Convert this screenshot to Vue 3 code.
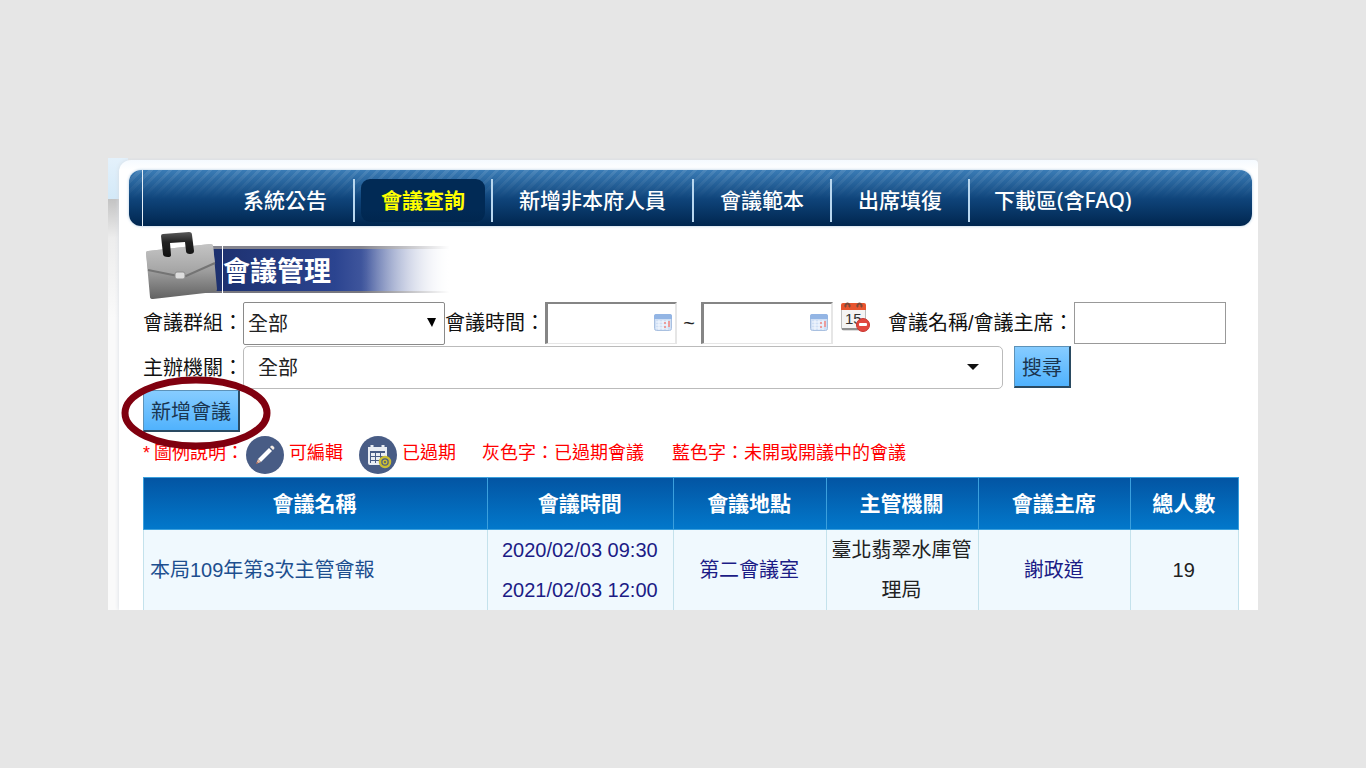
<script setup>
import { ref } from 'vue'

const navItems = [
  { text: '系統公告' },
  { text: '會議查詢', active: true },
  { text: '新增非本府人員' },
  { text: '會議範本' },
  { text: '出席填復' },
  { text: '下載區(含FAQ)' },
]

const group = ref('全部')
const agency = ref('全部')
const dateFrom = ref('')
const dateTo = ref('')
const keyword = ref('')

const meetings = [
  {
    name: '本局109年第3次主管會報',
    start: '2020/02/03 09:30',
    end: '2021/02/03 12:00',
    place: '第二會議室',
    agency: '臺北翡翠水庫管理局',
    chair: '謝政道',
    people: 19,
  },
]
</script>

<template>
  <div class="frame">
    <div class="panel">
      <nav class="nav">
        <ul>
          <li v-for="item in navItems" :key="item.text">
            <a href="#" :class="{ active: item.active }">{{ item.text }}</a>
          </li>
        </ul>
      </nav>

      <main class="content">
        <header class="title">
          <svg class="briefcase" viewBox="0 0 74 68" width="74" height="68" aria-hidden="true">
            <defs>
              <linearGradient id="bag" x1="0" y1="0" x2="0" y2="1">
                <stop offset="0" stop-color="#c2c2c2" />
                <stop offset="0.5" stop-color="#9c9c9c" />
                <stop offset="1" stop-color="#626262" />
              </linearGradient>
              <linearGradient id="flap" x1="0" y1="0" x2="0" y2="1">
                <stop offset="0" stop-color="#c4c4c4" />
                <stop offset="1" stop-color="#a0a0a0" />
              </linearGradient>
              <linearGradient id="handle" x1="0" y1="0" x2="0" y2="1">
                <stop offset="0" stop-color="#5a5a5a" />
                <stop offset="0.4" stop-color="#222" />
                <stop offset="1" stop-color="#111" />
              </linearGradient>
            </defs>
            <path d="M2 21 Q2 19 4 19 L66 12 Q69 12 69 14 L73 57 Q73 60 70 60 L9 67 Q6 67 6 65 Z" fill="url(#bag)" />
            <path d="M2 21 Q2 19 4 19 L66 12 Q69 12 69 14 L71 31 L42 44 L34 44 L4 38 Z" fill="url(#flap)" />
            <path d="M4 38 L34 44 L42 44 L71 31" fill="none" stroke="#747474" stroke-width="2" />
            <path d="M17 4 Q17 2 19 2 L45 0 Q48 0 48 3 L50 19 Q50 22 46 22 Q42 22 42 19 L41 10 L26 11 L27 23 Q27 25 24 25 Q19 25 19 22 Z" fill="url(#handle)" />
            <rect x="31" y="40" width="10" height="7" rx="2" fill="#ddd" stroke="#8b8b8b" />
          </svg>
          <h1>會議管理</h1>
        </header>

        <form @submit.prevent>
          <div class="row">
            <label for="group">會議群組：</label>
            <span class="select group">
              <select id="group" v-model="group">
                <option>全部</option>
              </select>
              <svg viewBox="0 0 10 10" width="10" height="10" aria-hidden="true"><path d="M0 0 H9 L5 9 Z" fill="#000" /></svg>
            </span>
            <label for="from">會議時間：</label>
            <span class="date">
              <input id="from" v-model="dateFrom" type="text" />
              <svg viewBox="0 0 18 17" width="18" height="17" aria-hidden="true">
                <rect x="0.5" y="0.5" width="17" height="16" rx="2" fill="#cfdff5" stroke="#a9c0e0" />
                <path d="M0 2 Q0 0 2 0 H16 Q18 0 18 2 V5 H0 Z" fill="#93b5e4" />
                <path d="M2 8 H16 M2 11 H16 M2 14 H12 M5 6 V16 M9 6 V16 M13 6 V16" stroke="#f4f8fe" />
                <path d="M10 8 h2 v2 h-2 Z M14 7 h2 v6 h-2 Z M10 12 h2 v2 h-2 Z" fill="#eb9c9c" />
              </svg>
            </span>
            <span class="tilde">~</span>
            <span class="date">
              <input id="to" v-model="dateTo" type="text" aria-label="會議時間" />
              <svg viewBox="0 0 18 17" width="18" height="17" aria-hidden="true">
                <rect x="0.5" y="0.5" width="17" height="16" rx="2" fill="#cfdff5" stroke="#a9c0e0" />
                <path d="M0 2 Q0 0 2 0 H16 Q18 0 18 2 V5 H0 Z" fill="#93b5e4" />
                <path d="M2 8 H16 M2 11 H16 M2 14 H12 M5 6 V16 M9 6 V16 M13 6 V16" stroke="#f4f8fe" />
                <path d="M10 8 h2 v2 h-2 Z M14 7 h2 v6 h-2 Z M10 12 h2 v2 h-2 Z" fill="#eb9c9c" />
              </svg>
            </span>
            <button class="clear" type="button" aria-label="清除">
              <svg viewBox="0 0 29 31" width="29" height="31" aria-hidden="true">
                <rect x="0.5" y="3" width="24" height="25" rx="2" fill="#f4f4f4" stroke="#bcbcbc" />
                <path d="M1 27 H24" stroke="#8f8f8f" stroke-width="2" />
                <path d="M0 3 Q0 1 2 1 H23 Q25 1 25 3 V8 H0 Z" fill="#e8552f" />
                <path d="M5 5 a2 2 0 1 1 3 0 M17 5 a2 2 0 1 1 3 0" fill="none" stroke="#7b4a3a" stroke-width="2" />
                <text x="4" y="22" font-size="15" fill="#333">15</text>
                <circle cx="22" cy="23" r="6.5" fill="#e2473f" stroke="#c9352e" />
                <rect x="18" y="21" width="8" height="3" rx="1" fill="#fff" />
              </svg>
            </button>
            <label for="keyword">會議名稱/會議主席：</label>
            <input id="keyword" v-model="keyword" class="keyword" type="text" />
          </div>

          <div class="row second">
            <label for="agency">主辦機關：</label>
            <span class="select agency">
              <select id="agency" v-model="agency">
                <option>全部</option>
              </select>
              <svg viewBox="0 0 12 6" width="12" height="6" aria-hidden="true"><path d="M0 0 H12 L6 6 Z" fill="#111" /></svg>
            </span>
            <button class="blue" type="submit">搜尋</button>
          </div>

          <div class="add">
            <button class="blue" type="button">新增會議</button>
            <svg class="ring" viewBox="0 0 150 74" width="150" height="74" aria-hidden="true">
              <ellipse cx="75" cy="37" rx="71" ry="33" fill="none" stroke="#80000f" stroke-width="7" />
            </svg>
          </div>
        </form>

        <div class="legend">
          <span class="star">*</span>
          <span class="head">圖例說明：</span>
          <svg viewBox="0 0 38 38" width="38" height="38" aria-hidden="true">
            <circle cx="19" cy="19" r="19" fill="#485c85" />
            <path d="M12 23 L23 12 L26 15 L15 26 Z" fill="#fff" />
            <path d="M24 11 L25 10 Q26 9 27 10 L28 11 Q29 12 28 13 L27 14 Z" fill="#f3ece4" />
            <path d="M12 23 L15 26 L10 28 Z" fill="#e4b9a2" />
            <path d="M11 26 L12 27 L10 28 Z" fill="#8b3a2c" />
          </svg>
          <span class="edit">可編輯</span>
          <svg viewBox="0 0 38 38" width="38" height="38" aria-hidden="true">
            <circle cx="19" cy="19" r="19" fill="#485c85" />
            <rect x="10" y="12" width="17" height="16" rx="1" fill="none" stroke="#e9edf3" stroke-width="2" />
            <path d="M9 11 H28 V15 H9 Z" fill="#e9edf3" />
            <path d="M13 9 V13 M24 9 V13" stroke="#e9edf3" stroke-width="3" />
            <path d="M12 17 h4 v3 h-4 Z M17 17 h4 v3 h-4 Z M22 17 h4 v3 h-4 Z M12 21 h4 v3 h-4 Z M17 21 h4 v3 h-4 Z M12 25 h4 v2 h-4 Z M17 25 h4 v2 h-4 Z" fill="#e9edf3" />
            <circle cx="26" cy="26" r="5" fill="#485c85" stroke="#cbbd33" stroke-width="2.5" />
            <circle cx="26" cy="26" r="1.8" fill="none" stroke="#cbbd33" stroke-width="1.5" />
          </svg>
          <span class="past">已過期</span>
          <span class="grey">灰色字：已過期會議</span>
          <span>藍色字：未開或開議中的會議</span>
        </div>

        <table>
          <colgroup>
            <col class="c-name" />
            <col class="c-time" />
            <col class="c-mid" />
            <col class="c-mid" />
            <col class="c-mid" />
            <col />
          </colgroup>
          <thead>
            <tr>
              <th>會議名稱</th>
              <th>會議時間</th>
              <th>會議地點</th>
              <th>主管機關</th>
              <th>會議主席</th>
              <th>總人數</th>
            </tr>
          </thead>
          <tbody>
            <tr v-for="m in meetings" :key="m.name">
              <td class="name"><a href="#">{{ m.name }}</a></td>
              <td class="navy">{{ m.start }}<br />{{ m.end }}</td>
              <td class="navy">{{ m.place }}</td>
              <td>{{ m.agency }}</td>
              <td class="navy">{{ m.chair }}</td>
              <td>{{ m.people }}</td>
            </tr>
          </tbody>
        </table>
      </main>
    </div>
  </div>
</template>

<style>
body {
  background: #e6e6e6;
}
</style>

<style scoped>
.frame {
  margin: 158px 108px;
  padding: 2px 0 0 11px;
  overflow: hidden;
  background:
    linear-gradient(#e4f1fb, #d3e9f8) 0 0 / 20px 41px no-repeat,
    linear-gradient(#e6e6e6, #e6e6e6) 20px 0 / 100% 20px no-repeat,
    linear-gradient(#c2c2c2 40px, #ededed 80px, #fafafa 160px);
  font-family: "Liberation Sans", "Noto Sans CJK TC", sans-serif;
  font-size: 20px;
  color: #222;
}
.frame * {
  box-sizing: border-box;
}
.panel {
  padding-top: 10px;
  border-radius: 12px 4px 0 0;
  background: linear-gradient(#f5faff, #fff 10px);
  box-shadow: 0 0 4px #d5dbe2;
}
.nav {
  height: 56px;
  margin: 0 6px 0 10px;
  padding-left: 13px;
  border-radius: 12px;
  overflow: hidden;
  background:
    linear-gradient(transparent, #0f447a 29px, #00264f),
    repeating-linear-gradient(135deg, #ffffff1a 0 3px, transparent 3px 7px),
    linear-gradient(#3a7cb6, #3a7cb6);
  box-shadow: 0 0 3px #a9c6df;
}
.nav ul {
  display: flex;
  height: 56px;
  margin: 0;
  padding: 9px 0 0 74px;
  border-left: 1px solid #e6f0f8;
  list-style: none;
}
.nav li {
  height: 43px;
  padding: 0 6px;
  border-right: 2px solid #b9d7ef;
}
.nav li:last-child {
  padding-left: 4px;
  border-right: 0;
}
.nav a {
  display: block;
  height: 43px;
  padding: 0 20px;
  border-radius: 9px;
  font-family: "Noto Sans", "Noto Sans CJK TC", sans-serif;
  font-size: 21px;
  font-weight: 500;
  line-height: 42px;
  color: #fff;
  text-decoration: none;
  white-space: nowrap;
}
.nav .active {
  background: linear-gradient(#012a55 70%, #00264f);
  font-weight: 700;
  color: #ff0;
}
.content {
  padding: 0 19px 0 24px;
}
.title {
  position: relative;
  padding: 20px 0 9px 62px;
}
.briefcase {
  position: absolute;
  left: 1px;
  top: 6px;
}
.title h1 {
  width: 260px;
  height: 47px;
  margin: 0;
  padding-left: 18px;
  background:
    linear-gradient(#fff, #fff) 17px 0 / 1px 100% no-repeat,
    linear-gradient(90deg, transparent 60%, #fff 94%),
    linear-gradient(#85858f 3px, transparent 3px 45px, #77777f 45px),
    linear-gradient(90deg, #1c2f6c, #2b4490 50%, #42589e 62%, #fff 96%);
  font-size: 27px;
  line-height: 52px;
  color: #fff;
}
.row {
  display: flex;
  align-items: flex-start;
  height: 44px;
}
.row label {
  flex: none;
  line-height: 43px;
  color: #111;
  white-space: nowrap;
}
input,
select,
button {
  font: inherit;
}
.select,
.date {
  position: relative;
  flex: none;
}
select {
  width: 100%;
  height: 100%;
  appearance: none;
  border: 1px solid #8a8a8a;
  border-radius: 0;
  background: #fff;
  color: #222;
}
.select svg,
.date svg {
  position: absolute;
  pointer-events: none;
}
.group {
  width: 202px;
  height: 43px;
}
.group select {
  padding: 0 4px;
  border-radius: 2px;
}
.group svg {
  right: 8px;
  top: 16px;
}
.date {
  width: 132px;
  height: 42px;
}
.date input {
  width: 100%;
  height: 100%;
  padding: 0 28px 0 4px;
  border: 3px solid;
  border-width: 2px 2px 1px 3px;
  border-color: #858585 #e6e6e6 #e6e6e6 #858585;
}
.date svg {
  right: 5px;
  top: 12px;
}
.tilde {
  width: 24px;
  line-height: 42px;
  text-align: center;
}
.clear {
  margin: 0 18px 0 8px;
  padding: 0;
  border: 0;
  background: none;
  line-height: 0;
}
.keyword {
  flex: 0 1 152px;
  min-width: 0;
  height: 42px;
  border: 1px solid #999;
}
.second label {
  line-height: 44px;
}
.agency {
  height: 43px;
  flex: 0 1 760px;
}
.agency select {
  padding: 0 14px;
  border-color: #bbb;
  border-radius: 5px;
}
.agency svg {
  right: 24px;
  top: 18px;
}
.blue {
  height: 42px;
  padding: 0 7px;
  border: 1px solid #5d92b8;
  border-right: 2px solid #2a4a61;
  border-bottom: 2px solid #2a4a61;
  background: linear-gradient(#86ccff, #50b2fd);
  color: #1a3550;
  white-space: nowrap;
}
.second .blue {
  margin-left: 11px;
}
.add {
  position: relative;
}
.ring {
  position: absolute;
  left: -22px;
  top: -14px;
  z-index: 1;
  pointer-events: none;
}
.legend {
  display: flex;
  align-items: center;
  height: 45px;
  font-size: 18px;
  line-height: 24px;
  color: #f00;
  white-space: nowrap;
}
.legend span {
  padding-bottom: 4px;
}
.star {
  width: 11px;
}
.head {
  margin-right: 2px;
}
.edit {
  margin: 0 16px 0 5px;
}
.past {
  margin: 0 26px 0 5px;
}
.grey {
  margin-right: 28px;
}
table {
  width: 100%;
  table-layout: fixed;
  border-collapse: separate;
  border-spacing: 0;
}
.c-name {
  width: 31.4%;
}
.c-time {
  width: 17%;
}
.c-mid {
  width: 13.9%;
}
th {
  height: 53px;
  padding: 0 2px 3px 0;
  border: 1px solid #3ba0dd;
  border-right-width: 0;
  background: linear-gradient(#0355a3, #0278cb);
  font-size: 21px;
  color: #fff;
}
th:last-child,
td:last-child {
  border-right-width: 1px;
}
td {
  padding: 0 6px 0 4px;
  border: 0 solid #c4e2ec;
  border-left-width: 1px;
  background: #f0f9fe;
  line-height: 40px;
  text-align: center;
}
.name {
  padding-left: 6px;
  text-align: left;
}
.name a {
  color: #1d4f8f;
  text-decoration: none;
}
.navy {
  color: #1c1c86;
}
</style>
